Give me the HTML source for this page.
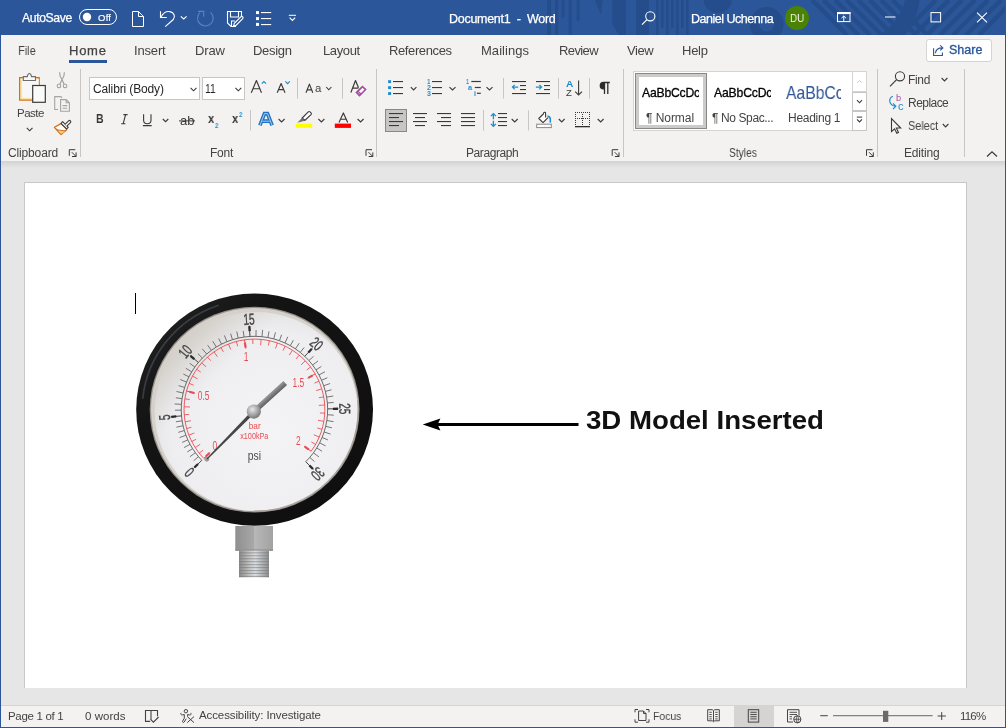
<!DOCTYPE html><html><head><meta charset="utf-8"><style>
html,body{margin:0;padding:0;width:1006px;height:728px;overflow:hidden;background:#f3f2f1;font-family:"Liberation Sans",sans-serif;}
.t{position:absolute;white-space:pre;transform-origin:0 0;will-change:transform;}
#root{position:relative;width:1006px;height:728px;overflow:hidden;}
</style></head><body><div id="root">
<div style="position:absolute;left:0;top:0;width:1006px;height:35px;background:#2b579a"></div>
<div style="position:absolute;left:0;top:35px;width:1006px;height:126px;background:#f3f2f1"></div>
<div style="position:absolute;left:0;top:161px;width:1006px;height:544px;background:#e6e6e6"></div>
<div style="position:absolute;left:0;top:161px;width:1006px;height:7px;background:linear-gradient(#d2d2d2,#e6e6e6)"></div>
<div style="position:absolute;left:24px;top:182px;width:943px;height:506px;background:#fff;border:1px solid #c8c8c8;box-sizing:border-box;border-bottom:none;"></div>
<div style="position:absolute;left:0;top:705px;width:1006px;height:23px;background:#f3f2f1;border-top:1px solid #d4d4d4;box-sizing:border-box"></div>
<div style="position:absolute;left:926px;top:39px;width:66px;height:22.5px;background:#fff;border:1px solid #d6d4d2;border-radius:3px;box-sizing:border-box"></div>
<div style="position:absolute;left:89px;top:77px;width:111px;height:23px;background:#fff;border:1px solid #c8c6c4;box-sizing:border-box"></div>
<div style="position:absolute;left:202px;top:77px;width:43px;height:23px;background:#fff;border:1px solid #c8c6c4;box-sizing:border-box"></div>
<div style="position:absolute;left:633px;top:71px;width:234px;height:60px;background:#fff;border:1px solid #d6d4d2;box-sizing:border-box"></div>
<div style="position:absolute;left:635px;top:73px;width:72px;height:56px;border:1px solid #8a8886;box-sizing:border-box"></div>
<div style="position:absolute;left:636px;top:74px;width:70px;height:54px;border:3px solid #cdcbc9;box-sizing:border-box"></div>
<div style="position:absolute;left:852px;top:71px;width:15px;height:21px;border:1px solid #d6d4d2;box-sizing:border-box;background:#fff"></div>
<div style="position:absolute;left:852px;top:92px;width:15px;height:19px;border:1px solid #c8c6c4;box-sizing:border-box;background:#fff"></div>
<div style="position:absolute;left:852px;top:111px;width:15px;height:20px;border:1px solid #c8c6c4;box-sizing:border-box;background:#fff"></div>
<div style="position:absolute;left:734px;top:706px;width:40px;height:21px;background:#d6d4d2"></div>
<svg style="position:absolute;left:0;top:0;will-change:transform" width="1006" height="728" viewBox="0 0 1006 728"><g clip-path="url(#tbclip)"><clipPath id="tbclip"><rect x="0" y="0" width="1006" height="35"/></clipPath><rect x="547.2" y="0" width="3.8999999999999773" height="35" fill="#254d8b"/><rect x="555" y="0" width="3.2999999999999545" height="35" fill="#254d8b"/><rect x="561.5" y="0" width="3.1000000000000227" height="17.5" fill="#254d8b"/><rect x="568.6" y="0" width="3.199999999999932" height="35" fill="#254d8b"/><rect x="576.6" y="0" width="3.1000000000000227" height="20.7" fill="#254d8b"/><rect x="636.2" y="0" width="12.799999999999955" height="35" fill="#254d8b"/><path d="M594.9,0H602.8L601,15Z" fill="#254d8b"/><path d="M612.3,0H625.9V35H619L612.3,24Z" fill="#254d8b"/><rect x="656" y="0" width="2.6" height="35" fill="#254d8b"/><rect x="661" y="0" width="2.6" height="28" fill="#254d8b"/><rect x="666" y="0" width="2.6" height="35" fill="#254d8b"/><rect x="671" y="0" width="2.6" height="28" fill="#254d8b"/><rect x="676" y="0" width="2.6" height="35" fill="#254d8b"/><rect x="681" y="0" width="2.6" height="28" fill="#254d8b"/><rect x="686" y="0" width="2.6" height="35" fill="#254d8b"/><path d="M703.8,0H731.7A13.95,12.7 0 0 1 703.8,0Z" fill="#254d8b"/><circle cx="766.7" cy="23.9" r="12.2" fill="none" stroke="#254d8b" stroke-width="9.4"/><path d="M812.0,0L847.0,35" stroke="#254d8b" stroke-width="4.5"/><path d="M823.5,0L858.5,35" stroke="#254d8b" stroke-width="4.5"/><path d="M835.0,0L870.0,35" stroke="#254d8b" stroke-width="4.5"/><path d="M846.5,0L881.5,35" stroke="#254d8b" stroke-width="4.5"/><path d="M858.0,0L893.0,35" stroke="#254d8b" stroke-width="4.5"/><path d="M869.5,0L904.5,35" stroke="#254d8b" stroke-width="4.5"/><path d="M881.0,0L916.0,35" stroke="#254d8b" stroke-width="4.5"/><path d="M892.5,0L927.5,35" stroke="#254d8b" stroke-width="4.5"/><path d="M905,0H919.5C918,14 913,26 905,35H880C893,26 902,14 905,0Z" fill="#254d8b"/><path d="M936,0L901,35" stroke="#254d8b" stroke-width="4.5"/><path d="M949,0L914,35" stroke="#254d8b" stroke-width="4.5"/><path d="M962,0L927,35" stroke="#254d8b" stroke-width="4.5"/><path d="M975,0L940,35" stroke="#254d8b" stroke-width="4.5"/><path d="M988,0L953,35" stroke="#254d8b" stroke-width="4.5"/><path d="M1001,0L966,35" stroke="#254d8b" stroke-width="4.5"/><path d="M1014,0L979,35" stroke="#254d8b" stroke-width="4.5"/></g><rect x="79.5" y="9.5" width="37" height="15" rx="7.5" fill="none" stroke="#fff" stroke-width="1"/><circle cx="87" cy="17" r="4.2" fill="#fff"/><path d="M132.5,11.5H138.5L143.5,16.5V26.5H132.5Z M138.5,11.5V16.5H143.5" fill="none" stroke="#fff" stroke-width="1"/><path d="M160.5,11.3V17.5H166.8" fill="none" stroke="#fff" stroke-width="1.1"/><path d="M161,17 C163.5,12.3 167,11 170,11.6 C174.5,12.6 175.5,17 173.3,19.5 L165.2,26.7" fill="none" stroke="#fff" stroke-width="1.1"/><path d="M180.8,16.3L183.7,19L186.6,16.3" fill="none" stroke="#fff" stroke-width="1.1"/><path d="M199.9,12.6A7.8,7.8 0 1 0 210.5,12.3" fill="none" stroke="#5b83bd" stroke-width="1.1"/><path d="M198.1,11.4H203.7V16.7" fill="none" stroke="#5b83bd" stroke-width="1.1"/><path d="M236,26.5H231L227.5,23V11.5H241.5V17" fill="none" stroke="#fff" stroke-width="1.1"/><path d="M230.5,11.5V17H238.5V11.5" fill="none" stroke="#fff" stroke-width="1.1"/><path d="M231.5,26.5V21H235" fill="none" stroke="#fff" stroke-width="1.1"/><path d="M233.5,26.3L234.3,23.3L240.8,16.8A1.3,1.3 0 0 1 242.7,18.7L236.2,25.2Z" fill="none" stroke="#fff" stroke-width="1.1"/><rect x="256" y="11.1" width="3" height="3" fill="#fff"/><rect x="256" y="17.1" width="3" height="3" fill="#fff"/><rect x="256" y="22.9" width="3" height="3" fill="#fff"/><rect x="261" y="12.0" width="10.2" height="1.1" fill="#fff"/><rect x="261" y="18.0" width="10.2" height="1.1" fill="#fff"/><rect x="261" y="24.0" width="10.2" height="1.1" fill="#fff"/><rect x="288.8" y="14.8" width="7.2" height="1" fill="#fff"/><path d="M289.6,17.6L292.4,20.4L295.2,17.6" fill="none" stroke="#fff" stroke-width="1.1"/><circle cx="650.3" cy="16.3" r="4.6" fill="none" stroke="#fff" stroke-width="1.1"/><path d="M647,19.6L642,24.6" fill="none" stroke="#fff" stroke-width="1.2"/><circle cx="797" cy="18" r="12" fill="#498205"/><rect x="837.5" y="12.6" width="12.5" height="9" fill="none" stroke="#fff" stroke-width="1"/><rect x="837" y="12.1" width="13.5" height="2" fill="#fff"/><path d="M843.75,16V21.5 M841.5,18.2L843.75,16L846,18.2" fill="none" stroke="#fff" stroke-width="1"/><rect x="885" y="16.5" width="10.5" height="1" fill="#fff"/><rect x="931" y="12.6" width="9.6" height="9.3" fill="none" stroke="#fff" stroke-width="1"/><path d="M977,12.6L987,22.4M987,12.6L977,22.4" fill="none" stroke="#fff" stroke-width="1.1"/><rect x="69" y="60" width="38" height="3" fill="#2b579a"/><path d="M933.6,48.2V55.5H942.4V52.6" fill="none" stroke="#2b579a" stroke-width="1.1"/><path d="M935.4,53.2C935.8,49.8 938.3,47.9 942.2,47.9 M940.2,45.4L942.9,47.9L940.2,50.4" fill="none" stroke="#2b579a" stroke-width="1.1"/><path d="M69.3,155.79999999999998V149.7H75.3" fill="none" stroke="#3b3a39" stroke-width="1"/><path d="M71.8,152.2L76.1,156.5 M72.0,156.5H76.1V152.39999999999998" fill="none" stroke="#3b3a39" stroke-width="1"/><path d="M366.0,155.79999999999998V149.7H372.0" fill="none" stroke="#3b3a39" stroke-width="1"/><path d="M368.5,152.2L372.8,156.5 M368.7,156.5H372.8V152.39999999999998" fill="none" stroke="#3b3a39" stroke-width="1"/><path d="M612.2,155.79999999999998V149.7H618.2" fill="none" stroke="#3b3a39" stroke-width="1"/><path d="M614.7,152.2L619.0,156.5 M614.9000000000001,156.5H619.0V152.39999999999998" fill="none" stroke="#3b3a39" stroke-width="1"/><path d="M866.5,155.79999999999998V149.7H872.5" fill="none" stroke="#3b3a39" stroke-width="1"/><path d="M869,152.2L873.3,156.5 M869.2,156.5H873.3V152.39999999999998" fill="none" stroke="#3b3a39" stroke-width="1"/><rect x="80" y="69" width="1" height="88" fill="#c8c6c4"/><rect x="376" y="69" width="1" height="88" fill="#c8c6c4"/><rect x="623" y="69" width="1" height="88" fill="#c8c6c4"/><rect x="877" y="69" width="1" height="88" fill="#c8c6c4"/><rect x="964" y="69" width="1" height="88" fill="#c8c6c4"/><path d="M987,156.5L992,151.8L997,156.5" fill="none" stroke="#3b3a39" stroke-width="1.2"/><rect x="19.6" y="77.6" width="19.6" height="22.5" fill="#fce4a6" stroke="#d96b16" stroke-width="1.2"/><rect x="22.1" y="79.2" width="16.6" height="18.6" fill="#f7f7f7"/><path d="M23.3,80.5V76.6H27.3C27.6,74.5 28.3,73.5 29.4,73.5C30.5,73.5 31.2,74.5 31.5,76.6H35.5V80.5Z" fill="#f7f7f7" stroke="#6e6d6c" stroke-width="1.1"/><rect x="32.7" y="85.5" width="12.6" height="16.8" fill="#fafafa" stroke="#3b3a39" stroke-width="1.2"/><path d="M26.8,127.8L29.650000000000002,130.8L32.5,127.8" fill="none" stroke="#3b3a39" stroke-width="1.1"/><path d="M59.6,72.2C59.4,75.5 60.6,77.6 62,79.6L59.9,84.2 M64.4,72.2C64.6,75.5 63.4,77.6 62,79.6L64.1,84.2" fill="none" stroke="#a6a4a2" stroke-width="1.2"/><rect x="57.3" y="84.3" width="3.3" height="3.3" rx="1.1" fill="none" stroke="#a6a4a2" stroke-width="1.1"/><rect x="63.4" y="84.3" width="3.3" height="3.3" rx="1.1" fill="none" stroke="#a6a4a2" stroke-width="1.1"/><path d="M58,109.5H54.7V96.6H60.8L62,97.8" fill="none" stroke="#a6a4a2" stroke-width="1.1"/><path d="M60.6,99.6H66.2L69.4,102.8V111.3H60.6Z M66.2,99.6V102.8H69.4 M62.6,105.6H67.2 M62.6,108.3H67.2" fill="none" stroke="#a6a4a2" stroke-width="1.1"/><path d="M54.4,127.3L61,123.6L66.8,129.4L61.1,134.5Z" fill="#fff" stroke="#d86c17" stroke-width="1.3" stroke-linejoin="round"/><path d="M57.8,130.2L65.3,131.2L61.2,133.9Z" fill="#f9cf77"/><path d="M56.6,129.7L65.6,131" fill="none" stroke="#d86c17" stroke-width="1"/><path d="M61,123.3L62.6,121.7L68.2,127.3L66.6,128.9Z" fill="#fff" stroke="#3b3a39" stroke-width="1.1" stroke-linejoin="round"/><path d="M65,124.4L68.6,120.8A1.25,1.25 0 0 1 70.4,122.6L66.8,126.2" fill="#fff" stroke="#3b3a39" stroke-width="1.1"/><path d="M190.6,87.8L193.54999999999998,90.8L196.5,87.8" fill="none" stroke="#3b3a39" stroke-width="1.1"/><path d="M235.4,87.8L238.35,90.8L241.3,87.8" fill="none" stroke="#3b3a39" stroke-width="1.1"/><path d="M251.3,92.7L256.4,80.5L261.5,92.7 M252.99200000000002,88.7H259.808" fill="none" stroke="#3b3a39" stroke-width="1.15" stroke-linejoin="round"/><path d="M261.8,83.6L263.9,81.5L266,83.6" fill="none" stroke="#1e8bcd" stroke-width="1.2"/><path d="M277.2,92.7L281.1,83.5L285.0,92.7 M278.508,89.66H283.692" fill="none" stroke="#3b3a39" stroke-width="1.15" stroke-linejoin="round"/><path d="M285.4,81.4L287.6,83.6L289.8,81.4" fill="none" stroke="#1e8bcd" stroke-width="1.2"/><rect x="297" y="78" width="1" height="20.599999999999994" fill="#c8c6c4"/><path d="M306.0,92.7L309.4,84.1L312.8,92.7 M307.14799999999997,89.852H311.65200000000004" fill="none" stroke="#3b3a39" stroke-width="1.15" stroke-linejoin="round"/><path d="M326.2,87L328.8,89.8L331.4,87" fill="none" stroke="#3b3a39" stroke-width="1.1"/><rect x="342" y="78" width="1" height="20.599999999999994" fill="#c8c6c4"/><path d="M350.9,92.5L355.5,80.5L358.5,87.8 M352.6,88.2H358.4" fill="none" stroke="#3b3a39" stroke-width="1.2" stroke-linejoin="round"/><path d="M362.5,86.6L365.6,89.6L359.5,95.6L356.4,92.5Z" fill="#fff" stroke="#a349a4" stroke-width="1.5"/><path d="M361.4,87.7L358,91.1L360.9,94" fill="none" stroke="#a349a4" stroke-width="1.2"/><path d="M357.6,91.4L360.6,94.4L359.3,95.6L356.3,92.6Z" fill="#a349a4" opacity="0.6"/><path d="M123.4,114.6H127.6 M121.2,123.7H125.4 M125.6,114.6L123.2,123.7" fill="none" stroke="#3b3a39" stroke-width="1.1"/><path d="M143.6,114.2V120.3C143.6,122.6 145,123.7 147.3,123.7C149.6,123.7 151,122.6 151,120.3V114.2 M142.9,125.6H151.7" fill="none" stroke="#3b3a39" stroke-width="1.1"/><path d="M162.8,119L165.55,121.7L168.3,119" fill="none" stroke="#3b3a39" stroke-width="1.1"/><rect x="179" y="120.4" width="16" height="1" fill="#3b3a39"/><rect x="250" y="110" width="1" height="20.5" fill="#c8c6c4"/><path d="M259.9,125.4L264.5,113.6H267.5L272.1,125.4 M262.4,121.2H269.6" fill="none" stroke="#1f73c6" stroke-width="3.7" stroke-linejoin="miter"/><path d="M259.9,125.4L264.5,113.6H267.5L272.1,125.4 M262.4,121.2H269.6" fill="none" stroke="#ffffff" stroke-width="0.7" opacity="0.9"/><path d="M278.6,119L281.6,121.9L284.6,119" fill="none" stroke="#3b3a39" stroke-width="1.1"/><path d="M302.2,118L308.3,111.9A1.2,1.2 0 0 1 310,111.9L311,112.9A1.2,1.2 0 0 1 311,114.6L304.7,120.5Z" fill="#fff" stroke="#3b3a39" stroke-width="1.1" stroke-linejoin="round"/><path d="M302,117.8L304.9,120.7L297.4,122.8Z" fill="#707070"/><rect x="295.8" y="123.6" width="16.4" height="4.3" fill="#ffff00"/><path d="M318.4,119L321.4,121.9L324.4,119" fill="none" stroke="#3b3a39" stroke-width="1.1"/><path d="M339.0,122.4L343.35,112.89999999999999L347.7,122.4 M340.452,119.26400000000001H346.24800000000005" fill="none" stroke="#3b3a39" stroke-width="1.15" stroke-linejoin="round"/><rect x="334.8" y="123.6" width="16.2" height="4.3" fill="#ff0000"/><path d="M357.6,119L360.6,121.9L363.6,119" fill="none" stroke="#3b3a39" stroke-width="1.1"/><rect x="388.1" y="80.2" width="3" height="2.9" fill="#1e8bcd"/><rect x="388.1" y="86.2" width="3" height="2.9" fill="#1e8bcd"/><rect x="388.1" y="92.1" width="3" height="2.9" fill="#1e8bcd"/><rect x="393" y="81" width="10" height="1.1" fill="#3b3a39"/><rect x="393" y="87" width="10" height="1.1" fill="#3b3a39"/><rect x="393" y="93" width="10" height="1.1" fill="#3b3a39"/><path d="M410.8,87.1L413.6,90.0L416.40000000000003,87.1" fill="none" stroke="#3b3a39" stroke-width="1.1"/><rect x="432" y="81" width="10" height="1.1" fill="#3b3a39"/><rect x="432" y="87" width="10" height="1.1" fill="#3b3a39"/><rect x="432" y="93" width="10" height="1.1" fill="#3b3a39"/><path d="M449.5,87.1L452.5,90.0L455.5,87.1" fill="none" stroke="#3b3a39" stroke-width="1.1"/><rect x="471.3" y="80.9" width="9.5" height="1.2" fill="#3b3a39"/><rect x="474.8" y="86.9" width="6" height="1.2" fill="#3b3a39"/><rect x="476.9" y="92.7" width="3.9" height="1.2" fill="#3b3a39"/><path d="M486.5,87.1L489.5,90.0L492.5,87.1" fill="none" stroke="#3b3a39" stroke-width="1.1"/><rect x="503" y="78" width="1" height="20.599999999999994" fill="#c8c6c4"/><rect x="512" y="81" width="14" height="1.1" fill="#3b3a39"/><rect x="520" y="85" width="6" height="1.1" fill="#3b3a39"/><rect x="520" y="89" width="6" height="1.1" fill="#3b3a39"/><rect x="512" y="93" width="14" height="1.1" fill="#3b3a39"/><path d="M518.2,87.1H512.4 M514.7,84.8L512.4,87.1L514.7,89.4" fill="none" stroke="#1e8bcd" stroke-width="1.2"/><rect x="536" y="81" width="14" height="1.1" fill="#3b3a39"/><rect x="544" y="85" width="6" height="1.1" fill="#3b3a39"/><rect x="544" y="89" width="6" height="1.1" fill="#3b3a39"/><rect x="536" y="93" width="14" height="1.1" fill="#3b3a39"/><path d="M535.9,87.1H541.6 M539.3,84.8L541.6,87.1L539.3,89.4" fill="none" stroke="#1e8bcd" stroke-width="1.2"/><rect x="558" y="78" width="1" height="20.599999999999994" fill="#c8c6c4"/><path d="M578.6,80.5V95 M575.2,91.6L578.6,95L582,91.6" fill="none" stroke="#3b3a39" stroke-width="1.1"/><rect x="589" y="78" width="1" height="20.599999999999994" fill="#c8c6c4"/><path d="M604.5,82.5V94 M607.8,82.5V94 M609.8,82.5H603.5C601.5,82.5 600.3,83.8 600.3,85.7C600.3,87.6 601.5,88.8 603.5,88.8H604.5" fill="none" stroke="#2d2c2b" stroke-width="1.3"/><path d="M604.5,82.5H603.5C601.5,82.5 600.3,83.8 600.3,85.7C600.3,87.6 601.5,88.8 603.5,88.8H604.5Z" fill="#2d2c2b"/><rect x="385.5" y="109.5" width="21" height="22" fill="#c8c6c4" stroke="#8a8886" stroke-width="1"/><rect x="389" y="113" width="14" height="1.1" fill="#3b3a39"/><rect x="389" y="117" width="10" height="1.1" fill="#3b3a39"/><rect x="389" y="121" width="14" height="1.1" fill="#3b3a39"/><rect x="389" y="125" width="10" height="1.1" fill="#3b3a39"/><rect x="413" y="113" width="14" height="1.1" fill="#3b3a39"/><rect x="415" y="117" width="10" height="1.1" fill="#3b3a39"/><rect x="413" y="121" width="14" height="1.1" fill="#3b3a39"/><rect x="415" y="125" width="10" height="1.1" fill="#3b3a39"/><rect x="437" y="113" width="14" height="1.1" fill="#3b3a39"/><rect x="441" y="117" width="10" height="1.1" fill="#3b3a39"/><rect x="437" y="121" width="14" height="1.1" fill="#3b3a39"/><rect x="441" y="125" width="10" height="1.1" fill="#3b3a39"/><rect x="461" y="113" width="14" height="1.1" fill="#3b3a39"/><rect x="461" y="117" width="14" height="1.1" fill="#3b3a39"/><rect x="461" y="121" width="14" height="1.1" fill="#3b3a39"/><rect x="461" y="125" width="14" height="1.1" fill="#3b3a39"/><rect x="483" y="110" width="1" height="20.80000000000001" fill="#c8c6c4"/><path d="M493.4,113.8V119.2 M490.9,116.1L493.4,113.6L495.9,116.1 M493.4,120.8V126.4 M490.9,123.9L493.4,126.4L495.9,123.9" fill="none" stroke="#1e8bcd" stroke-width="1.3"/><rect x="498" y="113" width="9" height="1.1" fill="#3b3a39"/><rect x="498" y="117" width="9" height="1.1" fill="#3b3a39"/><rect x="498" y="121" width="9" height="1.1" fill="#3b3a39"/><rect x="498" y="125" width="9" height="1.1" fill="#3b3a39"/><path d="M511.7,119L514.7,122L517.7,119" fill="none" stroke="#3b3a39" stroke-width="1.1"/><rect x="528" y="110.3" width="1" height="20.10000000000001" fill="#c8c6c4"/><rect x="536.7" y="124.2" width="14.6" height="3.4" fill="#fff" stroke="#8a8886" stroke-width="1"/><path d="M548,117.6L543,122.6L538.8,118.5L543.3,114C543.3,112.2 545.6,111.5 545.6,113.5V117.4" fill="#fff" stroke="#3b3a39" stroke-width="1.1" stroke-linejoin="round"/><path d="M547.5,116.4C549.8,116 550.8,118 550.3,122.6" fill="none" stroke="#1e8bcd" stroke-width="1.6"/><path d="M558.8,119L561.6999999999999,122L564.5999999999999,119" fill="none" stroke="#3b3a39" stroke-width="1.1"/><rect x="575" y="112" width="1" height="1" fill="#3b3a39"/><rect x="577" y="112" width="1" height="1" fill="#3b3a39"/><rect x="579" y="112" width="1" height="1" fill="#3b3a39"/><rect x="581" y="112" width="1" height="1" fill="#3b3a39"/><rect x="583" y="112" width="1" height="1" fill="#3b3a39"/><rect x="585" y="112" width="1" height="1" fill="#3b3a39"/><rect x="587" y="112" width="1" height="1" fill="#3b3a39"/><rect x="589" y="112" width="1" height="1" fill="#3b3a39"/><rect x="575" y="114" width="1" height="1" fill="#3b3a39"/><rect x="589" y="114" width="1" height="1" fill="#3b3a39"/><rect x="575" y="116" width="1" height="1" fill="#3b3a39"/><rect x="589" y="116" width="1" height="1" fill="#3b3a39"/><rect x="575" y="118" width="1" height="1" fill="#3b3a39"/><rect x="589" y="118" width="1" height="1" fill="#3b3a39"/><rect x="575" y="120" width="1" height="1" fill="#3b3a39"/><rect x="589" y="120" width="1" height="1" fill="#3b3a39"/><rect x="575" y="122" width="1" height="1" fill="#3b3a39"/><rect x="589" y="122" width="1" height="1" fill="#3b3a39"/><rect x="575" y="124" width="1" height="1" fill="#3b3a39"/><rect x="589" y="124" width="1" height="1" fill="#3b3a39"/><rect x="582" y="114" width="1" height="1" fill="#3b3a39"/><rect x="582" y="116" width="1" height="1" fill="#3b3a39"/><rect x="582" y="118" width="1" height="1" fill="#3b3a39"/><rect x="582" y="120" width="1" height="1" fill="#3b3a39"/><rect x="582" y="122" width="1" height="1" fill="#3b3a39"/><rect x="582" y="124" width="1" height="1" fill="#3b3a39"/><rect x="577" y="118" width="1" height="1" fill="#3b3a39"/><rect x="579" y="118" width="1" height="1" fill="#3b3a39"/><rect x="581" y="118" width="1" height="1" fill="#3b3a39"/><rect x="583" y="118" width="1" height="1" fill="#3b3a39"/><rect x="585" y="118" width="1" height="1" fill="#3b3a39"/><rect x="587" y="118" width="1" height="1" fill="#3b3a39"/><rect x="575" y="126" width="15" height="1.3" fill="#2d2c2b"/><path d="M597.7,119L600.6500000000001,122L603.6,119" fill="none" stroke="#3b3a39" stroke-width="1.1"/><path d="M857.2,82.8L859.5,80.5L861.8,82.8" fill="none" stroke="#c8c6c4" stroke-width="1"/><path d="M857,100.2L859.5,102.8L862,100.2" fill="none" stroke="#3b3a39" stroke-width="1.1"/><rect x="856.8" y="116.6" width="5.4" height="1" fill="#3b3a39"/><path d="M857,119.3L859.5,121.89999999999999L862,119.3" fill="none" stroke="#3b3a39" stroke-width="1.1"/><circle cx="900" cy="76.3" r="4.6" fill="none" stroke="#3b3a39" stroke-width="1.1"/><path d="M896.6,79.7L890,86.3" fill="none" stroke="#3b3a39" stroke-width="1.2"/><path d="M941.6,78L944.5,80.9L947.4,78" fill="none" stroke="#3b3a39" stroke-width="1.1"/><path d="M892.8,96.2C888.3,98.2 888.5,105 895.3,106.2 M893,103.3L895.8,106.2L893,109.1" fill="none" stroke="#1e8bcd" stroke-width="1.2"/><path d="M891.5,118.5V131.5L894.6,128.8L896.8,133.2L898.5,132.4L896.4,128H900.7Z" fill="none" stroke="#3b3a39" stroke-width="1.1"/><path d="M942.8,124L945.5999999999999,126.9L948.4,124" fill="none" stroke="#3b3a39" stroke-width="1.1"/><rect x="135" y="293" width="1" height="21" fill="#000"/><rect x="436" y="423" width="142.5" height="3" fill="#000"/><path d="M422.7,424.4L440.4,418.4L437.6,424.4L440.4,430.6Z" fill="#000"/><defs><radialGradient id="face" cx="0.58" cy="0.6" r="0.62"><stop offset="0" stop-color="#f4f4f6"/><stop offset="0.8" stop-color="#eeeef1"/><stop offset="1" stop-color="#e4e3e3"/></radialGradient><linearGradient id="shade" x1="0.1" y1="0.1" x2="0.9" y2="0.9"><stop offset="0" stop-color="#c8c2b9" stop-opacity="0.85"/><stop offset="0.28" stop-color="#d8d4ce" stop-opacity="0"/></linearGradient><linearGradient id="ring" x1="0" y1="0" x2="1" y2="1"><stop offset="0" stop-color="#262626"/><stop offset="0.3" stop-color="#141414"/><stop offset="1" stop-color="#0e0e0e"/></linearGradient><linearGradient id="bez" x1="0" y1="0" x2="1" y2="1"><stop offset="0" stop-color="#b9b4ad"/><stop offset="0.5" stop-color="#a9a6a2"/><stop offset="1" stop-color="#8e8b88"/></linearGradient><radialGradient id="hub" cx="0.4" cy="0.35" r="0.7"><stop offset="0" stop-color="#e8e8e8"/><stop offset="0.55" stop-color="#a5a5a5"/><stop offset="1" stop-color="#707070"/></radialGradient><linearGradient id="cw" x1="0" y1="0" x2="0" y2="1"><stop offset="0" stop-color="#9a9a9a"/><stop offset="1" stop-color="#5e5e5e"/></linearGradient><linearGradient id="thread" x1="0" y1="0" x2="1" y2="0"><stop offset="0" stop-color="#8a8a8a"/><stop offset="0.35" stop-color="#c4c4c4"/><stop offset="0.55" stop-color="#d8dce2"/><stop offset="1" stop-color="#8e8e8e"/></linearGradient><linearGradient id="nutL" x1="0" y1="0" x2="1" y2="0"><stop offset="0" stop-color="#8f8f8f"/><stop offset="1" stop-color="#a8a8a8"/></linearGradient><linearGradient id="nutR" x1="0" y1="0" x2="1" y2="0"><stop offset="0" stop-color="#b8b8b8"/><stop offset="1" stop-color="#a2a2a2"/></linearGradient></defs><path d="M235.3,526 H254 V550.7 H235.3 Z" fill="url(#nutL)"/><path d="M254,526 H273 V550.7 H254 Z" fill="url(#nutR)"/><rect x="235.3" y="549.5" width="37.7" height="1.2" fill="#8a8a8a"/><rect x="239" y="550.7" width="30" height="26.6" fill="url(#thread)"/><rect x="239" y="552.3" width="30" height="1.1" fill="#6f6f6f" opacity="0.5"/><rect x="239" y="555.2" width="30" height="1.1" fill="#6f6f6f" opacity="0.5"/><rect x="239" y="558.2" width="30" height="1.1" fill="#6f6f6f" opacity="0.5"/><rect x="239" y="561.1" width="30" height="1.1" fill="#6f6f6f" opacity="0.5"/><rect x="239" y="564.1" width="30" height="1.1" fill="#6f6f6f" opacity="0.5"/><rect x="239" y="567.0" width="30" height="1.1" fill="#6f6f6f" opacity="0.5"/><rect x="239" y="570.0" width="30" height="1.1" fill="#6f6f6f" opacity="0.5"/><rect x="239" y="572.9" width="30" height="1.1" fill="#6f6f6f" opacity="0.5"/><rect x="239" y="575.9" width="30" height="1.1" fill="#6f6f6f" opacity="0.5"/><ellipse cx="254.6" cy="409.6" rx="118.4" ry="116.2" fill="url(#ring)"/><path d="M142.8,398 A112.3,110.2 0 0 1 218,305.5" fill="none" stroke="#6f7f96" stroke-width="1.8" opacity="0.35" stroke-linecap="round"/><ellipse cx="254.6" cy="409.6" rx="104.9" ry="102.9" fill="#96928e"/><ellipse cx="254.6" cy="409.6" rx="103.6" ry="101.6" fill="#d5d0c9"/><ellipse cx="256.2" cy="411.40000000000003" rx="101.4" ry="99.4" fill="url(#face)"/><ellipse cx="256.2" cy="411.40000000000003" rx="101.4" ry="99.4" fill="url(#shade)"/><ellipse cx="254.6" cy="409.6" rx="103.6" ry="101.6" fill="none" stroke="#a8a39d" stroke-width="1.2" clip-path="url(#brclip)"/><clipPath id="brclip"><rect x="254" y="400" width="130" height="130"/></clipPath><path d="M201.79,460.35 L198.46,456.65 L195.38,452.73 L192.58,448.61 L190.06,444.32 L187.84,439.86 L185.93,435.25 L184.34,430.53 L183.07,425.72 L182.13,420.82 L181.53,415.88 L181.25,410.14 L181.43,404.39 L182.05,398.68 L183.13,393.03 L184.64,387.49 L186.58,382.08 L188.94,376.84 L191.71,371.80 L194.86,366.99 L198.38,362.45 L202.37,358.06 L206.72,354.00 L211.37,350.32 L216.31,347.02 L221.50,344.13 L226.91,341.68 L232.50,339.67 L238.23,338.12 L244.07,337.04 L249.98,336.44 L255.97,336.32 L261.95,336.69 L267.88,337.54 L273.72,338.88 L279.43,340.69 L284.97,342.97 L290.31,345.68 L295.40,348.83 L300.23,352.38 L304.74,356.31 L308.86,360.53 L312.62,365.06 L316.00,369.88 L318.99,374.95 L321.55,380.25 L323.69,385.74 L325.37,391.38 L326.60,397.14 L327.36,402.98 L327.65,408.86 L327.46,414.73 L326.81,420.57 L325.69,426.34 L324.11,432.00 L322.08,437.51 L319.61,442.85 L316.73,447.96 L313.44,452.84 L309.78,457.43 L305.76,461.71" fill="none" stroke="#5a5a5a" stroke-width="0.9"/><path d="M201.79,460.35L194.03,467.85" stroke="#444" stroke-width="1"/><path d="M197.98,464.03L194.39,467.50" stroke="#2a2a2a" stroke-width="2.3"/><path d="M198.46,456.65L193.64,460.71" stroke="#5e5e5e" stroke-width="0.85"/><path d="M195.38,452.73L189.89,456.75" stroke="#5e5e5e" stroke-width="0.85"/><path d="M192.58,448.61L187.25,451.98" stroke="#5e5e5e" stroke-width="0.85"/><path d="M190.06,444.32L184.08,447.55" stroke="#5e5e5e" stroke-width="0.85"/><path d="M187.84,439.86L182.11,442.47" stroke="#5e5e5e" stroke-width="0.85"/><path d="M185.93,435.25L179.57,437.65" stroke="#5e5e5e" stroke-width="0.85"/><path d="M184.34,430.53L178.30,432.35" stroke="#5e5e5e" stroke-width="0.85"/><path d="M183.07,425.72L176.44,427.22" stroke="#5e5e5e" stroke-width="0.85"/><path d="M182.13,420.82L175.91,421.80" stroke="#5e5e5e" stroke-width="0.85"/><path d="M181.53,415.88L170.77,416.82" stroke="#444" stroke-width="1"/><path d="M176.25,416.34L171.27,416.78" stroke="#2a2a2a" stroke-width="2.3"/><path d="M181.25,410.14L174.95,410.19" stroke="#5e5e5e" stroke-width="0.85"/><path d="M181.43,404.39L174.64,403.92" stroke="#5e5e5e" stroke-width="0.85"/><path d="M182.05,398.68L175.82,397.75" stroke="#5e5e5e" stroke-width="0.85"/><path d="M183.13,393.03L176.50,391.50" stroke="#5e5e5e" stroke-width="0.85"/><path d="M184.64,387.49L178.63,385.59" stroke="#5e5e5e" stroke-width="0.85"/><path d="M186.58,382.08L180.28,379.53" stroke="#5e5e5e" stroke-width="0.85"/><path d="M188.94,376.84L183.30,374.03" stroke="#5e5e5e" stroke-width="0.85"/><path d="M191.71,371.80L185.88,368.30" stroke="#5e5e5e" stroke-width="0.85"/><path d="M194.86,366.99L189.73,363.33" stroke="#5e5e5e" stroke-width="0.85"/><path d="M198.38,362.45L190.10,355.51" stroke="#444" stroke-width="1"/><path d="M194.32,359.04L190.49,355.83" stroke="#2a2a2a" stroke-width="2.3"/><path d="M202.37,358.06L197.89,353.63" stroke="#5e5e5e" stroke-width="0.85"/><path d="M206.72,354.00L202.28,348.85" stroke="#5e5e5e" stroke-width="0.85"/><path d="M211.37,350.32L207.66,345.22" stroke="#5e5e5e" stroke-width="0.85"/><path d="M216.31,347.02L212.77,341.22" stroke="#5e5e5e" stroke-width="0.85"/><path d="M221.50,344.13L218.67,338.51" stroke="#5e5e5e" stroke-width="0.85"/><path d="M226.91,341.68L224.35,335.38" stroke="#5e5e5e" stroke-width="0.85"/><path d="M232.50,339.67L230.61,333.66" stroke="#5e5e5e" stroke-width="0.85"/><path d="M238.23,338.12L236.73,331.49" stroke="#5e5e5e" stroke-width="0.85"/><path d="M244.07,337.04L243.18,330.80" stroke="#5e5e5e" stroke-width="0.85"/><path d="M249.98,336.44L249.32,325.66" stroke="#444" stroke-width="1"/><path d="M249.66,331.15L249.35,326.16" stroke="#2a2a2a" stroke-width="2.3"/><path d="M255.97,336.32L256.10,330.02" stroke="#5e5e5e" stroke-width="0.85"/><path d="M261.95,336.69L262.65,329.92" stroke="#5e5e5e" stroke-width="0.85"/><path d="M267.88,337.54L269.03,331.35" stroke="#5e5e5e" stroke-width="0.85"/><path d="M273.72,338.88L275.51,332.32" stroke="#5e5e5e" stroke-width="0.85"/><path d="M279.43,340.69L281.58,334.77" stroke="#5e5e5e" stroke-width="0.85"/><path d="M284.97,342.97L287.80,336.78" stroke="#5e5e5e" stroke-width="0.85"/><path d="M290.31,345.68L293.39,340.19" stroke="#5e5e5e" stroke-width="0.85"/><path d="M295.40,348.83L299.21,343.19" stroke="#5e5e5e" stroke-width="0.85"/><path d="M300.23,352.38L304.17,347.46" stroke="#5e5e5e" stroke-width="0.85"/><path d="M304.74,356.31L312.17,348.47" stroke="#444" stroke-width="1"/><path d="M308.39,352.46L311.82,348.83" stroke="#2a2a2a" stroke-width="2.3"/><path d="M308.86,360.53L313.54,356.31" stroke="#5e5e5e" stroke-width="0.85"/><path d="M312.62,365.06L318.02,360.93" stroke="#5e5e5e" stroke-width="0.85"/><path d="M316.00,369.88L321.30,366.47" stroke="#5e5e5e" stroke-width="0.85"/><path d="M318.99,374.95L324.98,371.75" stroke="#5e5e5e" stroke-width="0.85"/><path d="M321.55,380.25L327.33,377.74" stroke="#5e5e5e" stroke-width="0.85"/><path d="M323.69,385.74L330.12,383.53" stroke="#5e5e5e" stroke-width="0.85"/><path d="M325.37,391.38L331.48,389.82" stroke="#5e5e5e" stroke-width="0.85"/><path d="M326.60,397.14L333.30,395.99" stroke="#5e5e5e" stroke-width="0.85"/><path d="M327.36,402.98L333.63,402.42" stroke="#5e5e5e" stroke-width="0.85"/><path d="M327.65,408.86L338.45,408.77" stroke="#444" stroke-width="1"/><path d="M332.95,408.81L337.95,408.77" stroke="#2a2a2a" stroke-width="2.3"/><path d="M327.46,414.73L333.75,415.18" stroke="#5e5e5e" stroke-width="0.85"/><path d="M326.81,420.57L333.53,421.60" stroke="#5e5e5e" stroke-width="0.85"/><path d="M325.69,426.34L331.82,427.79" stroke="#5e5e5e" stroke-width="0.85"/><path d="M324.11,432.00L330.58,434.09" stroke="#5e5e5e" stroke-width="0.85"/><path d="M322.08,437.51L327.90,439.92" stroke="#5e5e5e" stroke-width="0.85"/><path d="M319.61,442.85L325.67,445.94" stroke="#5e5e5e" stroke-width="0.85"/><path d="M316.73,447.96L322.09,451.27" stroke="#5e5e5e" stroke-width="0.85"/><path d="M313.44,452.84L318.92,456.86" stroke="#5e5e5e" stroke-width="0.85"/><path d="M309.78,457.43L314.54,461.55" stroke="#5e5e5e" stroke-width="0.85"/><path d="M305.76,461.71L313.33,469.41" stroke="#444" stroke-width="1"/><path d="M309.47,465.49L312.98,469.06" stroke="#2a2a2a" stroke-width="2.3"/><g transform="translate(189.28 472.44) rotate(-134.00) scale(0.64 1)"><text x="0" y="5.7" text-anchor="middle" font-family="Liberation Sans" font-size="15.8" fill="#444" stroke="#444" stroke-width="0.35">0</text></g><g transform="translate(164.19 417.40) rotate(-95.00) scale(0.64 1)"><text x="0" y="5.7" text-anchor="middle" font-family="Liberation Sans" font-size="15.8" fill="#444" stroke="#444" stroke-width="0.35">5</text></g><g transform="translate(185.05 351.26) rotate(-50.00) scale(0.64 1)"><text x="0" y="5.7" text-anchor="middle" font-family="Liberation Sans" font-size="15.8" fill="#444" stroke="#444" stroke-width="0.35">10</text></g><g transform="translate(248.92 319.07) rotate(-3.50) scale(0.64 1)"><text x="0" y="5.7" text-anchor="middle" font-family="Liberation Sans" font-size="15.8" fill="#444" stroke="#444" stroke-width="0.35">15</text></g><g transform="translate(316.70 343.67) rotate(43.40) scale(0.64 1)"><text x="0" y="5.7" text-anchor="middle" font-family="Liberation Sans" font-size="15.8" fill="#444" stroke="#444" stroke-width="0.35">20</text></g><g transform="translate(345.05 408.71) rotate(89.50) scale(0.64 1)"><text x="0" y="5.7" text-anchor="middle" font-family="Liberation Sans" font-size="15.8" fill="#444" stroke="#444" stroke-width="0.35">25</text></g><g transform="translate(317.95 474.12) rotate(135.50) scale(0.64 1)"><text x="0" y="5.7" text-anchor="middle" font-family="Liberation Sans" font-size="15.8" fill="#444" stroke="#444" stroke-width="0.35">30</text></g><path d="M203.81,458.40 L200.70,454.97 L197.83,451.33 L195.20,447.52 L192.83,443.54 L190.72,439.41 L188.89,435.16 L187.35,430.79 L186.09,426.33 L185.13,421.80 L184.47,417.21 L184.10,412.13 L184.10,406.78 L184.51,401.45 L185.32,396.17 L186.53,390.96 L188.14,385.86 L190.12,380.90 L192.48,376.10 L195.19,371.50 L198.24,367.11 L201.66,362.93 L205.47,358.93 L209.59,355.25 L213.98,351.90 L218.62,348.90 L223.48,346.28 L228.53,344.05 L233.74,342.21 L239.08,340.80 L244.51,339.80 L250.01,339.24 L255.57,339.11 L261.14,339.42 L266.66,340.17 L272.10,341.35 L277.43,342.96 L282.62,344.98 L287.64,347.41 L292.44,350.23 L297.01,353.42 L301.31,356.96 L305.27,360.79 L308.91,364.88 L312.21,369.25 L315.16,373.86 L317.75,378.69 L319.95,383.70 L321.76,388.87 L323.16,394.16 L324.14,399.55 L324.71,405.00 L324.84,410.47 L324.56,415.92 L323.85,421.34 L322.72,426.69 L321.18,431.93 L319.24,437.04 L316.91,441.98 L314.20,446.72 L311.14,451.25" fill="none" stroke="#ea4a50" stroke-width="0.9"/><path d="M203.81,458.40L210.21,452.22" stroke="#ea4a50" stroke-width="1"/><path d="M205.89,456.39L209.49,452.92" stroke="#ea4a50" stroke-width="2.2"/><path d="M199.23,453.17L203.08,450.13" stroke="#ea4a50" stroke-width="0.85"/><path d="M195.20,447.52L200.16,444.33" stroke="#ea4a50" stroke-width="0.85"/><path d="M191.74,441.49L196.10,439.27" stroke="#ea4a50" stroke-width="0.85"/><path d="M188.89,435.16L194.39,433.01" stroke="#ea4a50" stroke-width="0.85"/><path d="M186.68,428.57L191.40,427.24" stroke="#ea4a50" stroke-width="0.85"/><path d="M185.13,421.80L190.94,420.77" stroke="#ea4a50" stroke-width="0.85"/><path d="M184.25,414.79L189.14,414.43" stroke="#ea4a50" stroke-width="0.85"/><path d="M184.10,406.78L190.00,407.01" stroke="#ea4a50" stroke-width="0.85"/><path d="M184.87,398.80L189.71,399.55" stroke="#ea4a50" stroke-width="0.85"/><path d="M186.53,390.96L195.12,393.31" stroke="#ea4a50" stroke-width="1"/><path d="M189.33,391.73L194.16,393.04" stroke="#ea4a50" stroke-width="2.2"/><path d="M189.08,383.36L193.63,385.18" stroke="#ea4a50" stroke-width="0.85"/><path d="M192.48,376.10L197.67,378.90" stroke="#ea4a50" stroke-width="0.85"/><path d="M196.67,369.27L200.70,372.07" stroke="#ea4a50" stroke-width="0.85"/><path d="M201.66,362.93L206.08,366.83" stroke="#ea4a50" stroke-width="0.85"/><path d="M207.49,357.05L210.76,360.70" stroke="#ea4a50" stroke-width="0.85"/><path d="M213.98,351.90L217.37,356.72" stroke="#ea4a50" stroke-width="0.85"/><path d="M221.02,347.54L223.35,351.85" stroke="#ea4a50" stroke-width="0.85"/><path d="M228.53,344.05L230.70,349.53" stroke="#ea4a50" stroke-width="0.85"/><path d="M236.40,341.45L237.65,346.19" stroke="#ea4a50" stroke-width="0.85"/><path d="M244.51,339.80L245.77,348.62" stroke="#ea4a50" stroke-width="1"/><path d="M244.92,342.68L245.63,347.63" stroke="#ea4a50" stroke-width="2.2"/><path d="M252.79,339.12L252.90,344.02" stroke="#ea4a50" stroke-width="0.85"/><path d="M261.14,339.42L260.58,345.29" stroke="#ea4a50" stroke-width="0.85"/><path d="M269.39,340.70L268.35,345.49" stroke="#ea4a50" stroke-width="0.85"/><path d="M277.43,342.96L275.51,348.53" stroke="#ea4a50" stroke-width="0.85"/><path d="M285.15,346.15L283.02,350.56" stroke="#ea4a50" stroke-width="0.85"/><path d="M292.44,350.23L289.26,355.20" stroke="#ea4a50" stroke-width="0.85"/><path d="M299.19,355.15L296.08,358.93" stroke="#ea4a50" stroke-width="0.85"/><path d="M305.27,360.79L301.02,364.87" stroke="#ea4a50" stroke-width="0.85"/><path d="M310.60,367.04L306.69,369.99" stroke="#ea4a50" stroke-width="0.85"/><path d="M315.16,373.86L307.49,378.37" stroke="#ea4a50" stroke-width="1"/><path d="M312.66,375.33L308.35,377.86" stroke="#ea4a50" stroke-width="2.2"/><path d="M318.90,381.17L314.41,383.15" stroke="#ea4a50" stroke-width="0.85"/><path d="M321.76,388.87L316.12,390.60" stroke="#ea4a50" stroke-width="0.85"/><path d="M323.70,396.85L318.88,397.73" stroke="#ea4a50" stroke-width="0.85"/><path d="M324.71,405.00L318.82,405.37" stroke="#ea4a50" stroke-width="0.85"/><path d="M324.75,413.20L319.86,412.94" stroke="#ea4a50" stroke-width="0.85"/><path d="M323.85,421.34L318.03,420.35" stroke="#ea4a50" stroke-width="0.85"/><path d="M322.00,429.32L317.30,427.94" stroke="#ea4a50" stroke-width="0.85"/><path d="M319.24,437.04L313.81,434.73" stroke="#ea4a50" stroke-width="0.85"/><path d="M315.60,444.38L311.35,441.95" stroke="#ea4a50" stroke-width="0.85"/><path d="M311.14,451.25L303.97,445.97" stroke="#ea4a50" stroke-width="1"/><path d="M308.80,449.53L304.78,446.56" stroke="#ea4a50" stroke-width="2.2"/><g transform="translate(214.9 445.2) scale(0.7 1)"><text x="0" y="4.3" text-anchor="middle" font-family="Liberation Sans" font-size="12" fill="#ea4a50">0</text></g><g transform="translate(203.6 395.6) scale(0.7 1)"><text x="0" y="4.3" text-anchor="middle" font-family="Liberation Sans" font-size="12" fill="#ea4a50">0.5</text></g><g transform="translate(246 357) scale(0.7 1)"><text x="0" y="4.3" text-anchor="middle" font-family="Liberation Sans" font-size="12" fill="#ea4a50">1</text></g><g transform="translate(298.3 382.9) scale(0.7 1)"><text x="0" y="4.3" text-anchor="middle" font-family="Liberation Sans" font-size="12" fill="#ea4a50">1.5</text></g><g transform="translate(298.3 441) scale(0.7 1)"><text x="0" y="4.3" text-anchor="middle" font-family="Liberation Sans" font-size="12" fill="#ea4a50">2</text></g><g transform="translate(254.7 429) scale(0.86 1)"><text x="0" y="0" text-anchor="middle" font-family="Liberation Sans" font-size="9.6" fill="#ea4a50">bar</text></g><g transform="translate(254.3 438.8) scale(0.78 1)"><text x="0" y="0" text-anchor="middle" font-family="Liberation Sans" font-size="9.3" fill="#ea4a50">x100kPa</text></g><g transform="translate(254.3 460.3) scale(0.8 1)"><text x="0" y="0" text-anchor="middle" font-family="Liberation Sans" font-size="13" fill="#4a4a4a">psi</text></g><circle cx="206.8" cy="459.2" r="2" fill="#aaa" stroke="#777" stroke-width="0.6"/><g transform="translate(253.8 411.6) rotate(-42.37)"><rect x="0" y="-2.7" width="42.5" height="5.4" fill="url(#cw)"/></g><g transform="translate(253.8 411.6) rotate(134.64)"><path d="M0,-1.8 L67,-0.6 L67,0.6 L0,1.8Z" fill="#454545"/></g><circle cx="253.8" cy="411.6" r="7.1" fill="url(#hub)"/><path d="M150.2,721.4H145.5V710.5H157.5V716.2 M151,710.5V719.2 M150.4,719.1L153.4,722.2L158.6,717" fill="none" stroke="#444342" stroke-width="1.1"/><circle cx="185.9" cy="711.2" r="1.7" fill="none" stroke="#444342" stroke-width="1"/><path d="M181.2,712.9C180.2,713.8 181,715.2 182.6,714.9L184.3,714.5V718.2L182.6,721.2C182.2,722.4 183.6,723 184.2,722L186.2,718.8 M190.8,712.9C191.7,713.8 191,715.2 189.4,714.9L187.6,714.5V716.4" fill="none" stroke="#444342" stroke-width="1"/><path d="M187.3,716.6L194,722.6 M194,716.6L187.3,722.6" fill="none" stroke="#444342" stroke-width="1"/><path d="M635,712.3V709.5H638 M646,709.5H649V712.3 M649,719.3V722.2H646 M638,722.2H635V719.3" fill="none" stroke="#444342" stroke-width="1"/><path d="M638.6,711H643.5L646,713.5V720.5H638.6Z M643.5,711V713.5H646" fill="none" stroke="#444342" stroke-width="1"/><path d="M707.7,709.7H712.3L713.5,710.7L714.7,709.7H719.3V720.8H714.7L713.5,721.8L712.3,720.8H707.7Z M713.5,710.7V721.3" fill="none" stroke="#444342" stroke-width="1"/><path d="M709.3,712.3H711.8 M709.3,714.5H711.8 M709.3,716.7H711.8 M709.3,718.9H711.8 M715.2,712.3H717.7 M715.2,714.5H717.7 M715.2,716.7H717.7 M715.2,718.9H717.7" fill="none" stroke="#444342" stroke-width="0.9"/><rect x="748.3" y="709.7" width="10.4" height="12.4" fill="none" stroke="#444342" stroke-width="1"/><path d="M750.3,712.3H756.7 M750.3,714.5H756.7 M750.3,716.7H756.7 M750.3,718.9H756.7" fill="none" stroke="#444342" stroke-width="0.9"/><path d="M793,722H787.5V709.7H799V715.5" fill="none" stroke="#444342" stroke-width="1"/><path d="M789.5,712.3H797 M789.5,714.5H797 M789.5,716.7H792 M789.5,718.9H792" fill="none" stroke="#444342" stroke-width="0.9"/><circle cx="797.3" cy="719.3" r="3.6" fill="#f3f2f1" stroke="#444342" stroke-width="1"/><path d="M793.7,719.3H800.9 M797.3,715.7C795.8,717.5 795.8,721.1 797.3,722.9 M797.3,715.7C798.8,717.5 798.8,721.1 797.3,722.9" fill="none" stroke="#444342" stroke-width="0.8"/><rect x="820.2" y="715.2" width="7.6" height="1" fill="#444342"/><rect x="833" y="715.2" width="99.7" height="1" fill="#666"/><rect x="883" y="710.8" width="5.3" height="11.1" fill="#6b6a69"/><path d="M937.6,716H945.8 M941.7,712.1V720" fill="none" stroke="#444342" stroke-width="1"/></svg>
<div class="t" style="left:22px;top:12px;font-size:12.2px;line-height:12.2px;color:#ffffff;letter-spacing:-0.380px;-webkit-text-stroke:0.25px #fff;">AutoSave</div>
<div class="t" style="left:98px;top:13px;font-size:9.5px;line-height:9.5px;color:#ffffff;letter-spacing:0.250px;-webkit-text-stroke:0.2px #fff;">Off</div>
<div class="t" style="left:449px;top:13px;font-size:12.5px;line-height:12.5px;color:#ffffff;letter-spacing:-0.282px;-webkit-text-stroke:0.25px #fff;">Document1&nbsp;&nbsp;-&nbsp;&nbsp;Word</div>
<div class="t" style="left:691px;top:13px;font-size:12.5px;line-height:12.5px;color:#ffffff;letter-spacing:-0.482px;-webkit-text-stroke:0.25px #fff;">Daniel Uchenna</div>
<div class="t" style="left:790px;top:13px;font-size:11px;line-height:11px;color:#f4f4e8;transform:scaleX(0.894);">DU</div>
<div class="t" style="left:18px;top:44px;font-size:13px;line-height:13px;color:#444342;transform:scaleX(0.850);">File</div>
<div class="t" style="left:69px;top:44px;font-size:13px;line-height:13px;color:#444342;letter-spacing:0.738px;-webkit-text-stroke:0.25px #444342;">Home</div>
<div class="t" style="left:134px;top:44px;font-size:13px;line-height:13px;color:#444342;letter-spacing:-0.163px;">Insert</div>
<div class="t" style="left:195px;top:44px;font-size:13px;line-height:13px;color:#444342;letter-spacing:-0.115px;">Draw</div>
<div class="t" style="left:253px;top:44px;font-size:13px;line-height:13px;color:#444342;letter-spacing:-0.297px;">Design</div>
<div class="t" style="left:323px;top:44px;font-size:13px;line-height:13px;color:#444342;letter-spacing:-0.389px;">Layout</div>
<div class="t" style="left:389px;top:44px;font-size:13px;line-height:13px;color:#444342;letter-spacing:-0.389px;">References</div>
<div class="t" style="left:481px;top:44px;font-size:13px;line-height:13px;color:#444342;letter-spacing:0.042px;">Mailings</div>
<div class="t" style="left:559px;top:44px;font-size:13px;line-height:13px;color:#444342;letter-spacing:-0.608px;">Review</div>
<div class="t" style="left:627px;top:44px;font-size:13px;line-height:13px;color:#444342;letter-spacing:-0.451px;">View</div>
<div class="t" style="left:682px;top:44px;font-size:13px;line-height:13px;color:#444342;letter-spacing:-0.250px;">Help</div>
<div class="t" style="left:949px;top:44px;font-size:12.5px;line-height:12.5px;color:#2b579a;letter-spacing:0.035px;-webkit-text-stroke:0.35px #2b579a;">Share</div>
<div class="t" style="left:8px;top:147px;font-size:12px;line-height:12px;color:#444342;letter-spacing:-0.147px;">Clipboard</div>
<div class="t" style="left:210px;top:147px;font-size:12px;line-height:12px;color:#444342;letter-spacing:-0.233px;">Font</div>
<div class="t" style="left:466px;top:147px;font-size:12px;line-height:12px;color:#444342;letter-spacing:-0.429px;">Paragraph</div>
<div class="t" style="left:729px;top:147px;font-size:12px;line-height:12px;color:#444342;transform:scaleX(0.854);">Styles</div>
<div class="t" style="left:904px;top:147px;font-size:12px;line-height:12px;color:#444342;letter-spacing:-0.181px;">Editing</div>
<div class="t" style="left:17px;top:108px;font-size:11.5px;line-height:11.5px;color:#444342;letter-spacing:-0.498px;">Paste</div>
<div class="t" style="left:93px;top:83px;font-size:12px;line-height:12px;color:#262626;letter-spacing:-0.131px;">Calibri (Body)</div>
<div class="t" style="left:205px;top:83px;font-size:12px;line-height:12px;color:#262626;transform:scaleX(0.859);">11</div>
<div class="t" style="left:315px;top:83px;font-size:11.5px;line-height:11.5px;color:#3b3a39;transform:scaleX(0.970);">a</div>
<div class="t" style="left:96px;top:112px;font-size:13.5px;line-height:13.5px;color:#333;font-weight:bold;transform:scaleX(0.779);">B</div>
<div class="t" style="left:180px;top:114px;font-size:13px;line-height:13px;color:#3b3a39;letter-spacing:0.031px;">ab</div>
<div class="t" style="left:208px;top:113px;font-size:12.5px;line-height:12.5px;color:#333;font-weight:bold;transform:scaleX(0.892);">x</div>
<div class="t" style="left:215px;top:122px;font-size:7.5px;line-height:7.5px;color:#1e8bcd;font-weight:bold;transform:scaleX(0.815);">2</div>
<div class="t" style="left:232px;top:113px;font-size:12.5px;line-height:12.5px;color:#333;font-weight:bold;transform:scaleX(0.892);">x</div>
<div class="t" style="left:239px;top:111px;font-size:7.5px;line-height:7.5px;color:#1e8bcd;font-weight:bold;transform:scaleX(0.815);">2</div>
<div class="t" style="left:427px;top:78px;font-size:7px;line-height:7px;color:#1e8bcd;font-weight:bold;transform:scaleX(0.848);">1</div>
<div class="t" style="left:427px;top:84px;font-size:7px;line-height:7px;color:#1e8bcd;font-weight:bold;transform:scaleX(0.925);">2</div>
<div class="t" style="left:427px;top:90px;font-size:7px;line-height:7px;color:#1e8bcd;font-weight:bold;transform:scaleX(0.925);">3</div>
<div class="t" style="left:466px;top:78px;font-size:7px;line-height:7px;color:#1e8bcd;font-weight:bold;transform:scaleX(0.745);">1</div>
<div class="t" style="left:468px;top:84px;font-size:7.5px;line-height:7.5px;color:#1e8bcd;font-weight:bold;transform:scaleX(0.959);">a</div>
<div class="t" style="left:474px;top:90px;font-size:7px;line-height:7px;color:#1e8bcd;font-weight:bold;transform:scaleX(0.981);">i</div>
<div class="t" style="left:566px;top:79px;font-size:9.5px;line-height:9.5px;color:#1e8bcd;font-weight:bold;transform:scaleX(1.064);">A</div>
<div class="t" style="left:566px;top:88px;font-size:9.5px;line-height:9.5px;color:#3b3a39;">Z</div>
<div class="t" style="left:642px;top:87px;font-size:12.2px;line-height:12.2px;color:#000;letter-spacing:-0.199px;clip-path:inset(0 2px 0 0);-webkit-text-stroke:0.3px #000;">AaBbCcDc</div>
<div class="t" style="left:646px;top:112px;font-size:12px;line-height:12px;color:#444342;letter-spacing:-0.053px;">&para; Normal</div>
<div class="t" style="left:714px;top:87px;font-size:12.2px;line-height:12.2px;color:#000;letter-spacing:-0.171px;clip-path:inset(0 2px 0 0);-webkit-text-stroke:0.3px #000;">AaBbCcDc</div>
<div class="t" style="left:712px;top:112px;font-size:12px;line-height:12px;color:#444342;letter-spacing:-0.389px;">&para; No Spac...</div>
<div class="t" style="left:786px;top:84px;font-size:18.5px;line-height:18.5px;color:#2f5496;transform:scaleX(0.849);clip-path:inset(0 3px 0 0);">AaBbCc</div>
<div class="t" style="left:788px;top:112px;font-size:12px;line-height:12px;color:#444342;letter-spacing:-0.275px;">Heading 1</div>
<div class="t" style="left:908px;top:74px;font-size:12px;line-height:12px;color:#444342;letter-spacing:-0.348px;">Find</div>
<div class="t" style="left:896px;top:93px;font-size:9.5px;line-height:9.5px;color:#a349a4;transform:scaleX(0.947);">b</div>
<div class="t" style="left:898px;top:102px;font-size:10px;line-height:10px;color:#1e8bcd;transform:scaleX(1.120);">c</div>
<div class="t" style="left:908px;top:97px;font-size:12px;line-height:12px;color:#444342;letter-spacing:-0.539px;">Replace</div>
<div class="t" style="left:908px;top:120px;font-size:12px;line-height:12px;color:#444342;transform:scaleX(0.906);">Select</div>
<div class="t" style="left:586px;top:408px;font-size:25px;line-height:25px;color:#111;font-weight:bold;transform:scaleX(1.105);">3D Model Inserted</div>
<div class="t" style="left:8px;top:711px;font-size:11.5px;line-height:11.5px;color:#444342;letter-spacing:-0.307px;">Page 1 of 1</div>
<div class="t" style="left:85px;top:711px;font-size:11.5px;line-height:11.5px;color:#444342;letter-spacing:0.042px;">0 words</div>
<div class="t" style="left:199px;top:710px;font-size:11.5px;line-height:11.5px;color:#444342;letter-spacing:-0.108px;">Accessibility: Investigate</div>
<div class="t" style="left:653px;top:711px;font-size:11.5px;line-height:11.5px;color:#444342;transform:scaleX(0.904);">Focus</div>
<div class="t" style="left:960px;top:711px;font-size:11.5px;line-height:11.5px;color:#444342;letter-spacing:-0.810px;">116%</div>
<div style="position:absolute;left:0;top:0;width:1006px;height:728px;box-sizing:border-box;border:1px solid #2b579a;border-top:none;pointer-events:none"></div>
</div></body></html>
